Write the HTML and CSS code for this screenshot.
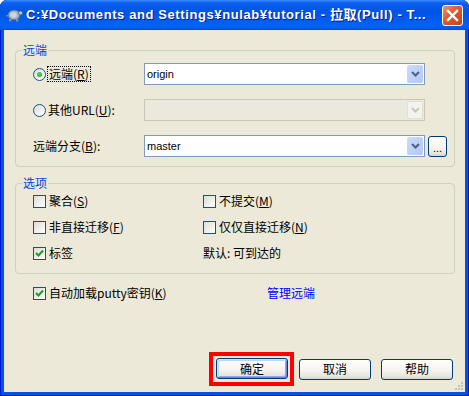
FILE: index.html
```html
<!DOCTYPE html>
<html lang="zh">
<head>
    <meta charset="UTF-8">
    <title>拉取(Pull)</title>
    <link rel="stylesheet" href="styles.css">
</head>
<body>
    <div class="window">
        <div class="titlebar">
            <svg class="app-icon" width="17" height="14" viewBox="0 0 17 14">
                <ellipse cx="8" cy="7" rx="6" ry="5" fill="#9fb3cc" stroke="#56657a" stroke-width="1"/>
                <path d="M4 6 L7 4 L10 5 L11 8 L8 10 L5 9 Z" fill="#c9d6e6"/>
                <circle cx="14.5" cy="5" r="2" fill="#b8c6d6" stroke="#56657a" stroke-width="0.8"/>
                <rect x="3" y="11" width="2.5" height="2.5" fill="#7d8da3"/>
                <rect x="10" y="11" width="2.5" height="2.5" fill="#7d8da3"/>
                <rect x="0.5" y="7" width="2" height="1.5" fill="#7d8da3"/>
            </svg>
            <span class="title">C:¥Documents and Settings¥nulab¥tutorial - 拉取(Pull) - T...</span>
            <button class="close-btn" aria-label="关闭">
                <svg width="13" height="13" viewBox="0 0 13 13">
                    <path d="M2 2 L11 11 M11 2 L2 11" stroke="#fff" stroke-width="2.4" stroke-linecap="square"/>
                </svg>
            </button>
        </div>

        <div class="client">
            <div class="group group-remote">
                <span class="group-title">远端</span>
                <div class="remote-grid">
                    <label class="opt">
                        <span class="radio checked"></span>
                        <span class="focus-text">远端(<u>R</u>)</span>
                    </label>
                    <div class="combo">
                        <span class="combo-text">origin</span>
                        <span class="combo-btn">
                            <svg width="9" height="6" viewBox="0 0 9 6"><path d="M1 1 L4.5 4.5 L8 1" fill="none" stroke="#4d6185" stroke-width="2"/></svg>
                        </span>
                    </div>
                    <span></span>

                    <label class="opt">
                        <span class="radio"></span>
                        <span>其他URL(<u>U</u>):</span>
                    </label>
                    <div class="combo disabled">
                        <span class="combo-text"></span>
                        <span class="combo-btn">
                            <svg width="9" height="6" viewBox="0 0 9 6"><path d="M1 1 L4.5 4.5 L8 1" fill="none" stroke="#c9c7ba" stroke-width="2"/></svg>
                        </span>
                    </div>
                    <span></span>

                    <span class="label">远端分支(<u>B</u>):</span>
                    <div class="combo">
                        <span class="combo-text">master</span>
                        <span class="combo-btn">
                            <svg width="9" height="6" viewBox="0 0 9 6"><path d="M1 1 L4.5 4.5 L8 1" fill="none" stroke="#4d6185" stroke-width="2"/></svg>
                        </span>
                    </div>
                    <button class="btn dots-btn">...</button>
                </div>
            </div>

            <div class="group group-options">
                <span class="group-title">选项</span>
                <div class="options-grid">
                    <label class="opt"><span class="check"></span><span>聚合(<u>S</u>)</span></label>
                    <label class="opt"><span class="check"></span><span>不提交(<u>M</u>)</span></label>
                    <label class="opt"><span class="check"></span><span>非直接迁移(<u>F</u>)</span></label>
                    <label class="opt"><span class="check"></span><span>仅仅直接迁移(<u>N</u>)</span></label>
                    <label class="opt"><span class="check checked"><svg width="11" height="11" viewBox="0 0 11 11"><path d="M2 5 L4.5 7.5 L9 2.5" fill="none" stroke="#21a121" stroke-width="2.2"/></svg></span><span>标签</span></label>
                    <span class="label">默认: 可到达的</span>
                </div>
            </div>

            <div class="extra-row">
                <label class="opt auto-load"><span class="check checked"><svg width="11" height="11" viewBox="0 0 11 11"><path d="M2 5 L4.5 7.5 L9 2.5" fill="none" stroke="#21a121" stroke-width="2.2"/></svg></span><span>自动加载putty密钥(<u>K</u>)</span></label>
                <a class="link" href="#">管理远端</a>
            </div>

            <div class="button-row">
                <div class="highlight">
                    <button class="btn default">确定</button>
                </div>
                <button class="btn">取消</button>
                <button class="btn">帮助</button>
            </div>

            <svg class="size-grip" width="10" height="10" viewBox="0 0 10 10">
                <g fill="#c5c2b2">
                    <rect x="7" y="1" width="2" height="2"/>
                    <rect x="4" y="4" width="2" height="2"/><rect x="7" y="4" width="2" height="2"/>
                    <rect x="1" y="7" width="2" height="2"/><rect x="4" y="7" width="2" height="2"/><rect x="7" y="7" width="2" height="2"/>
                </g>
            </svg>
        </div>
    </div>
</body>
</html>
```

FILE: styles.css
```css
html, body {
    margin: 0;
    padding: 0;
    background: #fff;
}

body {
    font-family: "Noto Sans CJK SC", "Liberation Sans", sans-serif;
    font-size: 12px;
    line-height: 14px;
    color: #000;
}

.window {
    width: 469px;
    height: 396px;
    display: flex;
    flex-direction: column;
    background: #0055e5;
    border-radius: 7px 7px 0 0;
    box-shadow: inset 1px 0 #0019cf, inset -1px 0 #001ea0, inset 0 -1px #001ea0;
    overflow: hidden;
}

.titlebar {
    height: 30px;
    flex: none;
    display: flex;
    align-items: center;
    padding: 0 6px 0 6px;
    background: linear-gradient(#3a8cff 0%, #0a5ff0 10%, #0054e3 40%, #0062f8 85%, #0058ee 95%, #0046d8 100%);
    border-radius: 7px 7px 0 0;
}

.app-icon {
    flex: none;
    margin-right: 3px;
}

.title {
    flex: 1;
    color: #fff;
    font-family: "Liberation Sans", "Noto Sans CJK SC", sans-serif;
    font-weight: bold;
    font-size: 13px;
    letter-spacing: 0.6px;
    white-space: nowrap;
    overflow: hidden;
    text-shadow: 1px 1px #0a1883;
}

.close-btn {
    flex: none;
    width: 21px;
    height: 21px;
    padding: 0;
    border: 1px solid #fff;
    border-radius: 3px;
    background: linear-gradient(135deg, #ec9272, #dc5a30 45%, #c5411a);
    display: flex;
    align-items: center;
    justify-content: center;
}

.client {
    flex: 1;
    position: relative;
    margin: 0 4px 4px;
    background: #ece9d8;
    display: flex;
    flex-direction: column;
    padding: 20px 10px 6px 11px;
}

.group {
    position: relative;
    border: 1px solid #d0d0bf;
    border-radius: 4px;
}

.group-title {
    position: absolute;
    top: -8px;
    left: 6px;
    padding: 0 1px;
    background: #ece9d8;
    color: #0046d5;
}

.group-remote {
    padding: 12px 0 9px 17px;
}

.remote-grid {
    display: grid;
    grid-template-columns: 111px 281px 22px;
    grid-auto-rows: 22px;
    row-gap: 14px;
    align-items: center;
}

.opt {
    display: flex;
    align-items: center;
    gap: 2px;
    white-space: nowrap;
}

.label {
    white-space: nowrap;
}

.focus-text {
    outline: 1px dotted #000;
    padding: 0 1px;
}

.radio {
    flex: none;
    width: 11px;
    height: 11px;
    border: 1px solid #1c5180;
    border-radius: 50%;
    background: linear-gradient(135deg, #dcdcd7, #fff);
    display: flex;
    align-items: center;
    justify-content: center;
}

.radio.checked::after {
    content: "";
    width: 5px;
    height: 5px;
    border-radius: 50%;
    background: radial-gradient(circle at 40% 40%, #55d855, #21a121);
}

.check {
    flex: none;
    width: 11px;
    height: 11px;
    margin-right: 1px;
    border: 1px solid #1c5180;
    background: linear-gradient(135deg, #dcdcd7, #fff);
    display: flex;
}

.combo {
    display: flex;
    height: 22px;
    box-sizing: border-box;
    border: 1px solid #7f9db9;
    background: #fff;
}

.combo-text {
    flex: 1;
    padding-left: 2px;
    font-family: "Liberation Sans", sans-serif;
    font-size: 11px;
    line-height: 20px;
}

.combo-btn {
    width: 16px;
    margin: 1px;
    border-radius: 2px;
    background: linear-gradient(135deg, #cddbfc, #b3c7f5);
    display: flex;
    align-items: center;
    justify-content: center;
}

.combo.disabled {
    border-color: #c9c7ba;
    background: #ebe9dd;
}

.combo.disabled .combo-btn {
    background: #f4f3ee;
    box-shadow: inset 0 0 0 1px #e2e0d6;
}

.btn {
    width: 72px;
    height: 21px;
    padding: 0;
    border: 1px solid #003c74;
    border-radius: 3px;
    background: linear-gradient(#fff, #f5f4f0 55%, #e6e4da 88%, #d6d0c5);
    font-family: "Noto Sans CJK SC", sans-serif;
    font-size: 12px;
    line-height: 14px;
    color: #000;
}

.btn.default {
    box-shadow: inset 1px 1px #cee7ff, inset -1px -1px #6982ee, inset 2px 2px #bcd4f6, inset -2px -2px #89adf0;
}

.dots-btn {
    width: 19px;
    height: 21px;
    margin-left: 3px;
    font-family: "Liberation Sans", sans-serif;
    font-size: 11px;
    line-height: 22px;
}

.group-options {
    margin-top: 16px;
    padding: 9px 0 12px 17px;
}

.options-grid {
    display: grid;
    grid-template-columns: 170px 1fr;
    grid-auto-rows: 16px;
    row-gap: 10px;
    align-items: center;
}

.extra-row {
    display: flex;
    align-items: center;
    height: 16px;
    margin-top: 11px;
    padding-left: 18px;
}

.auto-load {
    width: 234px;
}

.link {
    color: #0000ff;
    text-decoration: none;
}

.button-row {
    margin-top: auto;
    display: flex;
    align-items: center;
    justify-content: flex-end;
    gap: 10px;
    padding-right: 2px;
}

.highlight {
    border: 4px solid #ff0000;
    padding: 2px 2px 3px 3px;
    margin-right: -5px;
    display: flex;
}

.size-grip {
    position: absolute;
    right: 1px;
    bottom: 1px;
}
```
